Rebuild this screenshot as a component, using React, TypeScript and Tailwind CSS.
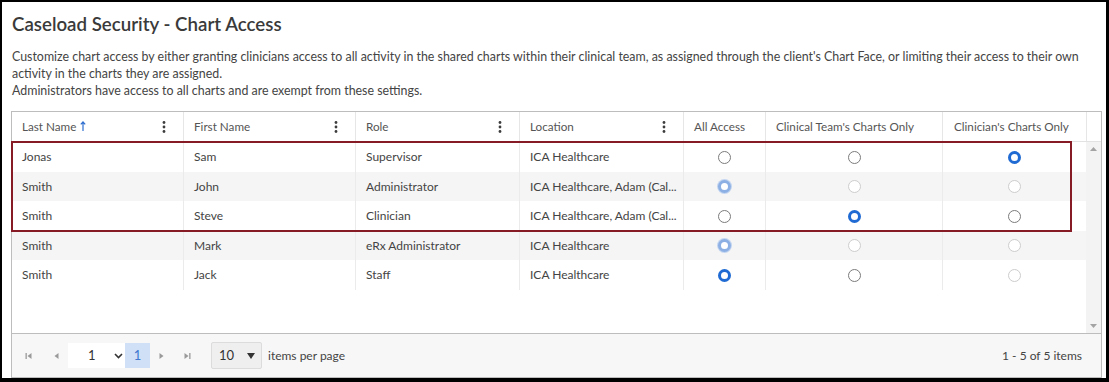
import React from 'react';

type Access = 'all' | 'team' | 'own';

interface Row {
    last: string;
    first: string;
    role: string;
    location: string;
    value: Access;
    disabled: boolean;
    h: string;
}

const rows: Row[] = [
    { last: 'Jonas', first: 'Sam', role: 'Supervisor', location: 'ICA Healthcare', value: 'own', disabled: false, h: 'h-[30px]' },
    { last: 'Smith', first: 'John', role: 'Administrator', location: 'ICA Healthcare, Adam (Cal...', value: 'all', disabled: true, h: 'h-[29px]' },
    { last: 'Smith', first: 'Steve', role: 'Clinician', location: 'ICA Healthcare, Adam (Cal...', value: 'team', disabled: false, h: 'h-[30px]' },
    { last: 'Smith', first: 'Mark', role: 'eRx Administrator', location: 'ICA Healthcare', value: 'all', disabled: true, h: 'h-[29px]' },
    { last: 'Smith', first: 'Jack', role: 'Staff', location: 'ICA Healthcare', value: 'all', disabled: false, h: 'h-[30px]' },
];

const Radio: React.FC<{ checked: boolean; disabled?: boolean }> = ({ checked, disabled }) => {
    if (checked) {
        return (
            <span
                className={
                    disabled
                        ? 'block w-[13px] h-[13px] rounded-full bg-white border-[3.5px] border-[#8db0e4] shadow-[0_0_0_1px_#c3d5f0]'
                        : 'block w-[13px] h-[13px] rounded-full bg-white border-[3.5px] border-[#1f6bd3]'
                }
            />
        );
    }
    return (
        <span
            className={
                disabled
                    ? 'block w-[13px] h-[13px] rounded-full bg-white border border-[#cdcdcd]'
                    : 'block w-[13px] h-[13px] rounded-full bg-white border border-[#7b7b7b]'
            }
        />
    );
};

const Kebab = () => (
    <svg width="4" height="12" viewBox="0 0 4 12" className="text-[#3d3d3d]">
        <circle cx="2" cy="1.5" r="1.4" fill="currentColor" />
        <circle cx="2" cy="6" r="1.4" fill="currentColor" />
        <circle cx="2" cy="10.5" r="1.4" fill="currentColor" />
    </svg>
);

const PagerArrow: React.FC<{ dir: 'left' | 'right'; bar?: boolean }> = ({ dir, bar }) => (
    <svg width="8" height="8" viewBox="0 0 8 8" className="text-[#9a9a9a]">
        {dir === 'left' ? (
            <>
                {bar && <rect x="0.5" y="1" width="1.3" height="6" fill="currentColor" />}
                <polygon points="6.5,1 2.5,4 6.5,7" fill="currentColor" />
            </>
        ) : (
            <>
                <polygon points="1.5,1 5.5,4 1.5,7" fill="currentColor" />
                {bar && <rect x="6.2" y="1" width="1.3" height="6" fill="currentColor" />}
            </>
        )}
    </svg>
);

const cols = ['w-[171px]', 'w-[172px]', 'w-[164px]', 'w-[164px]', 'w-[82px]', 'w-[177px]', 'w-[144px]'];

export default function App() {
    return (
        <div className="w-[1109px] h-[382px] bg-white border-l-2 border-t-2 border-r-[3px] border-b-4 border-black pl-[9px] pr-[4px] pt-[8px] font-['Lato','Open_Sans',sans-serif] text-[#444]">
            <h1 className="text-[18.7px] leading-[28px] font-semibold text-[#3a3a3a] pl-[1px]">
                Caseload Security - Chart Access
            </h1>
            <p className="mt-[10px] text-[12.4px] leading-[17px] text-[#444] pl-[1px] whitespace-nowrap">
                Customize chart access by either granting clinicians access to all activity in the shared charts within their clinical team, as assigned through the client's Chart Face, or limiting their access to their own
                <br />
                activity in the charts they are assigned.
                <br />
                Administrators have access to all charts and are exempt from these settings.
            </p>

            {/* Grid */}
            <div className="relative mt-[12px] w-[1091px] h-[267px] border border-[#bdbdbd] flex flex-col text-[12px]">
                {/* Header */}
                <div className="flex h-[30px] border-b border-[#e2e2e2] text-[#555] text-[11.7px]">
                    <div className={`${cols[0]} flex items-center justify-between pl-[10px] pr-[17px]`}>
                        <span className="flex items-center gap-[4px]">
                            Last Name
                            <svg width="6" height="10" viewBox="0 0 6 10" className="text-[#2f6fd0]">
                                <path d="M3 1 L3 10 M0.8 3.4 L3 1 L5.2 3.4" stroke="currentColor" strokeWidth="1.2" fill="none" />
                            </svg>
                        </span>
                        <Kebab />
                    </div>
                    <div className={`${cols[1]} flex items-center justify-between pl-[10px] pr-[17px] border-l border-[#e6e6e6]`}>
                        <span>First Name</span>
                        <Kebab />
                    </div>
                    <div className={`${cols[2]} flex items-center justify-between pl-[10px] pr-[17px] border-l border-[#e6e6e6]`}>
                        <span>Role</span>
                        <Kebab />
                    </div>
                    <div className={`${cols[3]} flex items-center justify-between pl-[10px] pr-[17px] border-l border-[#e6e6e6]`}>
                        <span>Location</span>
                        <Kebab />
                    </div>
                    <div className={`${cols[4]} flex items-center pl-[10px] border-l border-[#e6e6e6]`}>All Access</div>
                    <div className={`${cols[5]} flex items-center pl-[10px] border-l border-[#e6e6e6]`}>Clinical Team's Charts Only</div>
                    <div className={`${cols[6]} flex items-center pl-[11px] border-l border-[#e6e6e6]`}>Clinician's Charts Only</div>
                    <div className="flex-1 border-l border-[#e6e6e6]" />
                </div>

                {/* Body */}
                <div className="flex h-[191px]">
                    <div className="w-[1074px] flex flex-col">
                        {rows.map((r, i) => (
                            <div key={i} className={`flex ${r.h} ${i % 2 === 1 ? 'bg-[#f5f5f5]' : 'bg-white'} text-[#444]`}>
                                <div className={`${cols[0]} flex items-center pl-[10px]`}>{r.last}</div>
                                <div className={`${cols[1]} flex items-center pl-[10px] border-l border-[#ebebeb]`}>{r.first}</div>
                                <div className={`${cols[2]} flex items-center pl-[10px] border-l border-[#ebebeb]`}>{r.role}</div>
                                <div className={`${cols[3]} flex items-center pl-[10px] border-l border-[#ebebeb]`}>{r.location}</div>
                                <div className={`${cols[4]} flex items-center justify-center border-l border-[#ebebeb]`}>
                                    <Radio checked={r.value === 'all'} disabled={r.disabled} />
                                </div>
                                <div className={`${cols[5]} flex items-center justify-center border-l border-[#ebebeb]`}>
                                    <Radio checked={r.value === 'team'} disabled={r.disabled} />
                                </div>
                                <div className={`${cols[6]} flex items-center justify-center border-l border-[#ebebeb]`}>
                                    <Radio checked={r.value === 'own'} disabled={r.disabled || r.first === 'Jack'} />
                                </div>
                            </div>
                        ))}
                    </div>
                    {/* Scrollbar */}
                    <div className="flex-1 bg-[#f3f3f3] flex flex-col justify-between items-center py-[5px]">
                        <svg width="7" height="4" viewBox="0 0 7 4" className="text-[#a3a3a3]">
                            <polygon points="0,4 3.5,0 7,4" fill="currentColor" />
                        </svg>
                        <svg width="7" height="4" viewBox="0 0 7 4" className="text-[#a3a3a3]">
                            <polygon points="0,0 3.5,4 7,0" fill="currentColor" />
                        </svg>
                    </div>
                </div>

                {/* Pager */}
                <div className="flex-1 border-t border-[#bdbdbd] bg-[#f7f7f7] flex items-center pl-[13px] pr-[19px] text-[#444]">
                    <div className="flex items-center">
                        <span className="w-[8px] flex justify-center"><PagerArrow dir="left" bar /></span>
                        <span className="w-[8px] ml-[19px] flex justify-center"><PagerArrow dir="left" /></span>
                        <div className="ml-[8px] w-[57px] h-[25px] bg-white flex items-center">
                            <span className="ml-[20px] text-[13px] text-[#333]">1</span>
                            <svg width="9" height="6" viewBox="0 0 9 6" className="ml-[18px] text-[#333]">
                                <path d="M1 1 L4.5 4.5 L8 1" stroke="currentColor" strokeWidth="1.6" fill="none" />
                            </svg>
                        </div>
                        <div className="w-[25px] h-[25px] bg-[#d0e0f6] text-[#3f78d1] text-[13px] flex items-center justify-center">1</div>
                        <span className="w-[8px] ml-[8px] flex justify-center"><PagerArrow dir="right" /></span>
                        <span className="w-[8px] ml-[17px] flex justify-center"><PagerArrow dir="right" bar /></span>
                        <div className="ml-[20px] w-[51px] h-[27px] bg-[#efefef] border border-[#dcdcdc] rounded-[2px] flex items-center pl-[7px] text-[13px] text-[#333]">
                            <span>10</span>
                            <svg width="8" height="6" viewBox="0 0 8 6" className="ml-[13px] text-[#333]">
                                <polygon points="0,0 8,0 4,6" fill="currentColor" />
                            </svg>
                        </div>
                        <span className="ml-[6px] text-[12px] text-[#444]">items per page</span>
                    </div>
                    <span className="ml-auto text-[12px] text-[#444]">1 - 5 of 5 items</span>
                </div>

                {/* Annotation highlight */}
                <div className="absolute left-[-1px] top-[29px] w-[1061px] h-[91px] border-2 border-[#861a25] pointer-events-none" />
            </div>
        </div>
    );
}
